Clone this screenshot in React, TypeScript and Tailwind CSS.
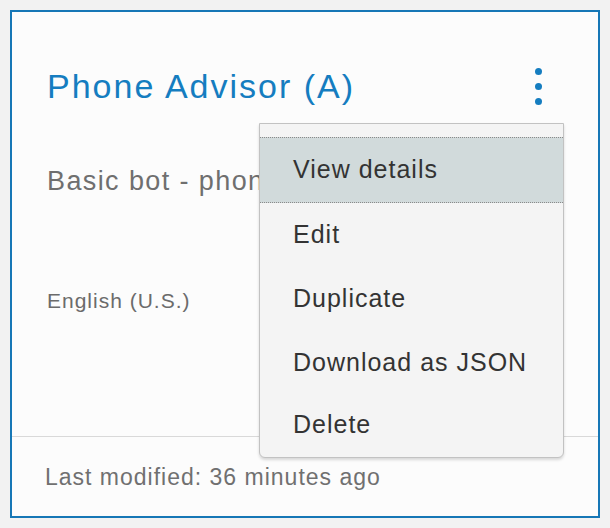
import React from "react";

const items = ["Edit", "Duplicate", "Download as JSON"];

export default function App() {
  return (
    <div className="w-[610px] h-[528px] bg-[#f2f2f2] p-[10px] font-['Liberation_Sans',Arial,sans-serif]">
      <div className="relative h-[508px] w-[590px] border-2 border-[#1677b6] bg-[#fcfcfc] flex flex-col">
        <div className="h-[424px] pl-[35px] pr-[56px] pt-[54px] flex flex-col">
          <div className="flex items-center justify-between h-[40px]">
            <div className="text-[34px] leading-[40px] tracking-[2px] text-[#157dc0]">
              Phone Advisor (A)
            </div>
            <div className="flex flex-col gap-[8px] items-center">
              <span className="w-[7px] h-[7px] rounded-full bg-[#157dc0]" />
              <span className="w-[7px] h-[7px] rounded-full bg-[#157dc0]" />
              <span className="w-[7px] h-[7px] rounded-full bg-[#157dc0]" />
            </div>
          </div>
          <div className="mt-[59px] text-[27px] leading-[32px] tracking-[1.4px] text-[#6f6f6f] whitespace-nowrap">
            Basic bot - phone advisor
          </div>
          <div className="mt-[92px] text-[21px] leading-[24px] tracking-[1px] text-[#6b6b6b]">
            English (U.S.)
          </div>
        </div>
        <div className="border-t border-[#d9d9d9] flex-1 flex items-center pl-[33px]">
          <span className="text-[23px] leading-[26px] tracking-[1px] text-[#707070]">
            Last modified: 36 minutes ago
          </span>
        </div>

        <div className="absolute left-[247px] top-[111px] w-[305px] border border-[#c2c2c2] rounded-b-[6px] bg-[#f4f4f4] pt-[13px] shadow-[0_2px_3px_rgba(0,0,0,0.15)] text-[#333] text-[25px] tracking-[1px]">
          <div className="h-[66px] border-y border-dotted border-[#8a8a8a] bg-[#d1dadb] flex items-center pl-[33px]">
            View details
          </div>
          {items.map((t) => (
            <div key={t} className="h-[64px] flex items-center pl-[33px]">
              {t}
            </div>
          ))}
          <div className="h-[62px] flex items-center pl-[33px] pb-[2px]">
            Delete
          </div>
        </div>
      </div>
    </div>
  );
}
